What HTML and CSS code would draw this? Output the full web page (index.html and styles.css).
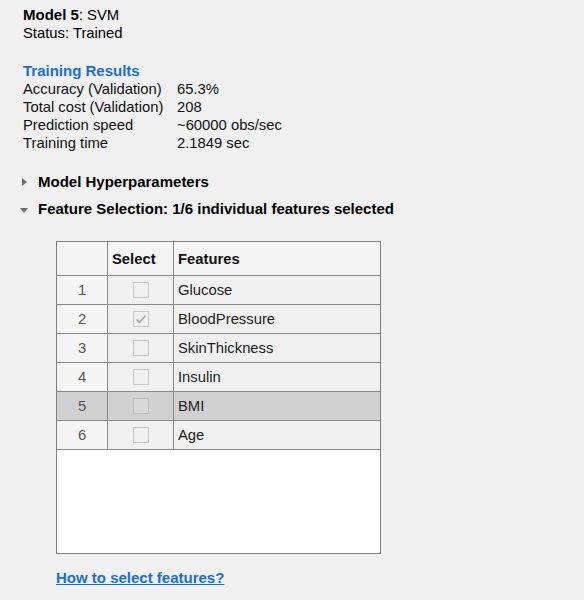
FILE: index.html
```html
<!DOCTYPE html>
<html>
<head>
<meta charset="utf-8">
<link rel="stylesheet" href="styles.css">
</head>
<body>
<div class="page">
  <div class="line"><b class="bold">Model 5</b>: SVM</div>
  <div class="line">Status: Trained</div>

  <div class="results">
    <div class="line heading">Training Results</div>
    <div class="kv">
      <span>Accuracy (Validation)</span><span>65.3%</span>
      <span>Total cost (Validation)</span><span>208</span>
      <span>Prediction speed</span><span>~60000 obs/sec</span>
      <span>Training time</span><span>2.1849 sec</span>
    </div>
  </div>

  <div class="section first">
    <span class="tri right"></span><span class="stitle">Model Hyperparameters</span>
  </div>
  <div class="section second">
    <span class="tri down"></span><span class="stitle">Feature Selection: 1/6 individual features selected</span>
  </div>

  <div class="table">
    <div class="grid">
      <div class="cell hdr rowhdr"></div>
      <div class="cell hdr">Select</div>
      <div class="cell hdr last">Features</div>

      <div class="cell num">1</div>
      <div class="cell chk"><span class="box"></span></div>
      <div class="cell txt last">Glucose</div>

      <div class="cell num">2</div>
      <div class="cell chk"><span class="box"><svg width="14" height="14" viewBox="0 0 14 14"><polyline points="2.5,7.5 5.5,10.5 11.5,3.5" fill="none" stroke="#a8a8a8" stroke-width="1.6"/></svg></span></div>
      <div class="cell txt last">BloodPressure</div>

      <div class="cell num">3</div>
      <div class="cell chk"><span class="box"></span></div>
      <div class="cell txt last">SkinThickness</div>

      <div class="cell num">4</div>
      <div class="cell chk"><span class="box"></span></div>
      <div class="cell txt last">Insulin</div>

      <div class="cell num sel">5</div>
      <div class="cell chk sel"><span class="box"></span></div>
      <div class="cell txt last sel">BMI</div>

      <div class="cell num">6</div>
      <div class="cell chk"><span class="box"></span></div>
      <div class="cell txt last">Age</div>
    </div>
  </div>

  <a class="link" href="#">How to select features?</a>
</div>
</body>
</html>
```

FILE: styles.css
```css
html, body {
  margin: 0;
  padding: 0;
  background: #f0f0f0;
}

.page {
  font-family: "Liberation Sans", Arial, sans-serif;
  font-size: 14.8px;
  color: #000;
  padding: 6px 0 0 23px;
  width: 561px;
  height: 594px;
}

.bold {
  font-size: 15px;
}

.line {
  line-height: 18px;
  height: 18px;
}

.results {
  margin-top: 20px;
}

.heading {
  color: #1a6fd2;
  font-weight: bold;
  font-size: 15px;
}

.kv {
  display: grid;
  grid-template-columns: 154px auto;
  line-height: 18px;
  color: #111;
}

.section {
  display: flex;
  align-items: center;
  height: 18px;
  line-height: 18px;
  margin-left: -3px;
}

.section.first {
  margin-top: 21px;
}

.section.second {
  margin-top: 9px;
}

.stitle {
  font-weight: bold;
  font-size: 15px;
}

.tri {
  display: inline-block;
  width: 18px;
  height: 9px;
  position: relative;
}

.tri.right::after {
  content: "";
  position: absolute;
  left: 2px;
  top: 0;
  border-top: 4.5px solid transparent;
  border-bottom: 4.5px solid transparent;
  border-left: 5px solid #6e6e6e;
}

.tri.down::after {
  content: "";
  position: absolute;
  left: 0;
  top: 3px;
  border-left: 4.5px solid transparent;
  border-right: 4.5px solid transparent;
  border-top: 5px solid #6e6e6e;
}

.table {
  margin-top: 23px;
  margin-left: 33px;
  width: 323px;
  height: 311px;
  border: 1px solid #7f7f7f;
  background: #fff;
}

.grid {
  display: grid;
  grid-template-columns: 51px 66px 206px;
  grid-template-rows: 34px repeat(6, 29px);
}

.cell {
  box-sizing: border-box;
  border-right: 1px solid #8a8a8a;
  border-bottom: 1px solid #8a8a8a;
  background: #f0f0f0;
  display: flex;
  align-items: center;
}

.cell.last {
  border-right: none;
}

.hdr {
  background: #f4f4f4;
  font-weight: bold;
  padding-left: 4px;
  color: #111;
}

.hdr.rowhdr {
  padding-left: 0;
}

.num {
  background: #f5f5f5;
  justify-content: center;
  color: #555;
  padding-bottom: 1px;
}

.chk {
  justify-content: center;
}

.txt {
  padding-left: 4px;
  padding-bottom: 1px;
  color: #222;
}

.cell.sel {
  background: #d1d1d1;
}

.box {
  box-sizing: border-box;
  width: 16px;
  height: 16px;
  border: 1px solid #c8c8c8;
  background: #f0f0f0;
  display: flex;
  align-items: center;
  justify-content: center;
}

.sel .box {
  background: #d8d8d8;
  border-color: #bdbdbd;
}

.link {
  display: inline-block;
  margin-top: 15px;
  margin-left: 33px;
  line-height: 18px;
  font-size: 15px;
  color: #1a6fd2;
  font-weight: bold;
  text-decoration: underline;
}
```
